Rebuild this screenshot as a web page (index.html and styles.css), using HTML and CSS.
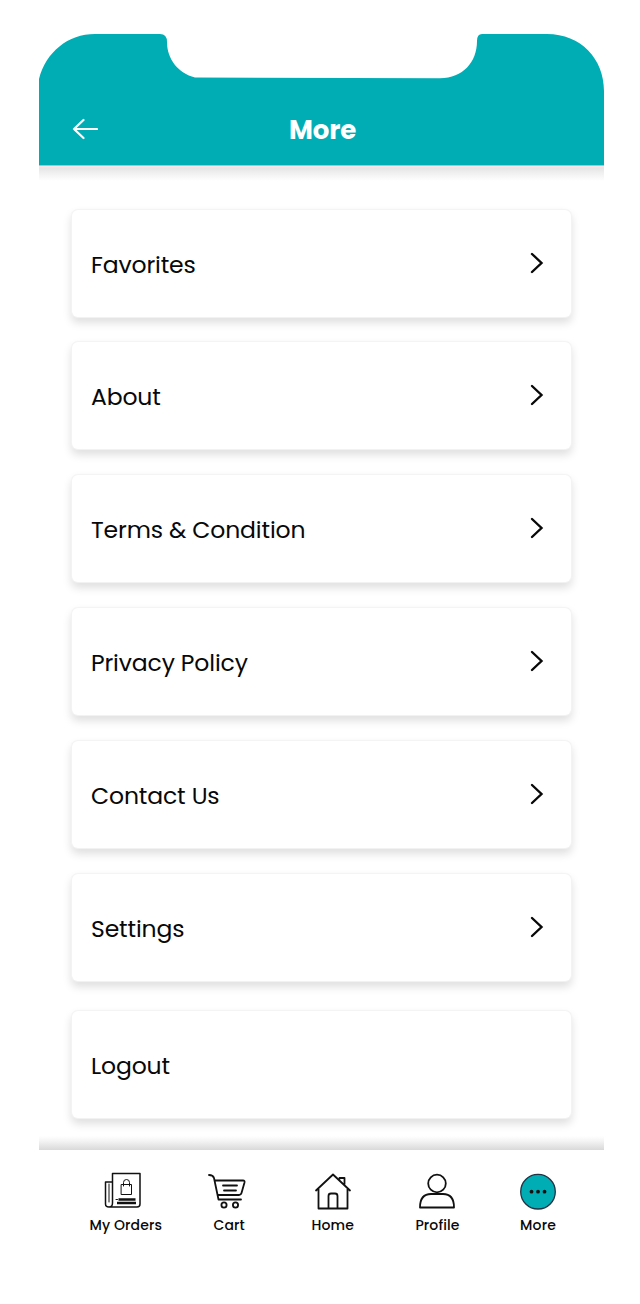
FILE: index.html
```html
<!DOCTYPE html>
<html lang="en">
<head>
<meta charset="utf-8">
<title>More</title>
<link rel="stylesheet" href="styles.css">
</head>
<body>
<div class="phone">
  <header class="header">
    <svg class="header-shape" viewBox="0 0 565 132" aria-hidden="true"><path d="M0 131.500V45C7 18 29 0 56 0H121Q128 0 128 8C128 25 139 39 156 43.500L401 44.200C424 44 438 28 438 7Q438 0 443 0H508C542 0 565 25 565 57V131.500Z"/></svg>
    <div class="header-bar">
      <svg class="back" viewBox="0 0 26 22"><path d="M11.500 2 2 11 11.500 20M2 11H25"/></svg>
      <h1 class="title">More</h1>
    </div>
  </header>
  <main class="list">
    <a class="card"><span class="label">Favorites</span><svg class="chevron" viewBox="0 0 14 22"><path d="M2 2 11.500 11 2 20"/></svg></a>
    <a class="card about-card"><span class="label">About</span><svg class="chevron" viewBox="0 0 14 22"><path d="M2 2 11.500 11 2 20"/></svg></a>
    <a class="card"><span class="label">Terms &amp; Condition</span><svg class="chevron" viewBox="0 0 14 22"><path d="M2 2 11.500 11 2 20"/></svg></a>
    <a class="card"><span class="label">Privacy Policy</span><svg class="chevron" viewBox="0 0 14 22"><path d="M2 2 11.500 11 2 20"/></svg></a>
    <a class="card"><span class="label">Contact Us</span><svg class="chevron" viewBox="0 0 14 22"><path d="M2 2 11.500 11 2 20"/></svg></a>
    <a class="card"><span class="label">Settings</span><svg class="chevron" viewBox="0 0 14 22"><path d="M2 2 11.500 11 2 20"/></svg></a>
    <a class="card logout-card"><span class="label">Logout</span></a>
  </main>
  <nav class="tabs">
    <a class="tab orders">
      <svg class="icon" viewBox="0 0 40 40"><path d="M9.500 3.500H37V34Q37 37 34 37H6Q2.500 37 2.500 34V12H9.500M9.500 3.500V33Q9.500 37 6 37"/><path class="thin" d="M6 14V32M18.500 14.500H28.500V24.500H18.500ZM20.500 16V12.500Q20.500 9.500 23.500 9.500T26.500 12.500V16M13 29.500H14.500"/><path class="thick" d="M15.500 29.500H32.500M14 33H33"/></svg>
      <span>My Orders</span>
    </a>
    <a class="tab cart">
      <svg class="icon" viewBox="0 0 40 40"><path d="M2 5Q6 5 7 8L11.500 29.500H34M8.500 10.500H36Q38 10.500 37.500 12.500L34.500 23Q34 25 32 25H11M16 15.500H30M17 20.500H29"/><circle cx="17" cy="35" r="2.600"/><circle cx="28.500" cy="35" r="2.600"/></svg>
      <span>Cart</span>
    </a>
    <a class="tab home">
      <svg class="icon" viewBox="0 0 40 40"><path d="M3 20.500 20 4.500 37 20.500M5.500 19V38.500H34.500V19M15.500 38V26Q15.500 23.500 18 23.500H22Q24.500 23.500 24.500 26V38M26.500 9V8H31.500V14"/></svg>
      <span>Home</span>
    </a>
    <a class="tab profile">
      <svg class="icon" viewBox="0 0 40 40"><circle cx="20" cy="13.500" r="8.800"/><path d="M3 37.500Q3 24 14 24H26Q37 24 37 37.500Z"/></svg>
      <span>Profile</span>
    </a>
    <a class="tab more">
      <svg class="icon" viewBox="0 0 40 40"><circle class="disc" cx="20" cy="21.700" r="17.300"/><g class="dots"><circle cx="13.500" cy="21.700" r="1.900"/><circle cx="20" cy="21.700" r="1.900"/><circle cx="26.500" cy="21.700" r="1.900"/></g></svg>
      <span>More</span>
    </a>
  </nav>
</div>
</body>
</html>
```
FILE: styles.css
```css
* { box-sizing: border-box; }
body { margin: 0; background: #fff; color: #080808; font-family: Poppins, Inter, sans-serif; }
.phone { width: 565px; height: 1304px; margin-left: 39px; padding-top: 34px; overflow: hidden; }
.header { display: grid; height: 132px; }
.header::after { content: ""; grid-row: 2; height: 16px; background: linear-gradient(#f9e5e8 0 1px, #e5e5e5 2px, #f0f0f0 7px, #fff 15px); }
.header-shape { grid-area: 1 / 1; width: 565px; height: 132px; fill: #01adb5; }
.header-bar { grid-area: 1 / 1; display: grid; grid-template-columns: 33px 26px 1fr; align-items: center; padding-top: 58px; }
.back { grid-column: 2; width: 26px; height: 22px; fill: none; stroke: #fff; stroke-width: 2.2; stroke-linecap: round; stroke-linejoin: round; }
.title { width: 68px; margin: 2px 0 0 191px; color: #fff; font-size: 26px; font-weight: 700; line-height: 36px; white-space: nowrap; letter-spacing: -.1px; }
.list { display: flex; flex-direction: column; gap: 26px; padding: 44px 33px 0; height: 984px; background: linear-gradient(#fff0 970px, #f4f4f4 975px, #d9d9d9 984px); }
.card { display: flex; flex: none; justify-content: space-between; align-items: center; height: 107px; width: 499px; padding: 0 27.5px 0 19px; border-radius: 6px; background: #fff; box-shadow: 0 0 1px 1px #f3f3f3, 0 5px 9px 1px #00000020; }
.about-card { margin: -1px 0 0; }
.logout-card { margin-top: 4px; }
.label { font-size: 23.5px; line-height: 34px; white-space: nowrap; margin-top: 3px; letter-spacing: -.14px; }
.chevron { width: 14px; height: 22px; fill: none; stroke: #080808; stroke-width: 2.4; stroke-linecap: round; margin-bottom: 1px; }
.tabs { display: flex; height: 154px; background: #fff; padding: 20px 0 0 35px; }
.tab { display: flex; flex: none; flex-direction: column; align-items: center; width: 103.5px; font-size: 14px; font-weight: 500; line-height: 20px; gap: 5px; white-space: nowrap; letter-spacing: .12px; }
.profile { width: 106px; }
.more { width: 95px; }
.orders .icon { margin-right: 5px; }
.cart .icon { margin-right: 4px; }
.profile .icon { margin-right: 2px; }
.icon { width: 40px; height: 40px; fill: none; stroke: #111; stroke-width: 1.8; stroke-linejoin: round; stroke-linecap: round; }
.orders .icon { stroke-width: 1.5; }
.icon .thin { stroke-width: 1; }
.icon .thick { stroke-width: 2.4; stroke-linecap: butt; }
.disc { fill: #01adb5; stroke: #234; stroke-width: 1.3; }
.dots { fill: #111; stroke: none; }
```
